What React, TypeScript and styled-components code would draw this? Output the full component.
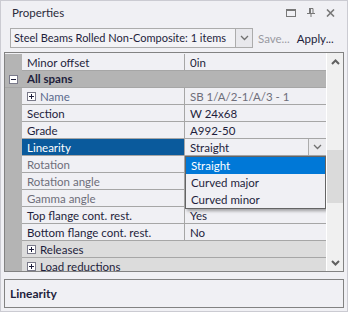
import React from 'react';
import styled, { createGlobalStyle } from 'styled-components';

const FONT = `'Lato', 'Noto Sans', sans-serif`;

interface PropRow {
  kind: 'prop' | 'category' | 'group';
  name: string;
  value?: string;
  muted?: boolean;
  expandable?: boolean;
  selected?: boolean;
}

const rows: PropRow[] = [
  { kind: 'prop', name: 'Minor offset', value: '0in' },
  { kind: 'category', name: 'All spans' },
  { kind: 'prop', name: 'Name', value: 'SB 1/A/2-1/A/3 - 1', muted: true, expandable: true },
  { kind: 'prop', name: 'Section', value: 'W 24x68' },
  { kind: 'prop', name: 'Grade', value: 'A992-50' },
  { kind: 'prop', name: 'Linearity', value: 'Straight', selected: true },
  { kind: 'prop', name: 'Rotation', value: '', muted: true },
  { kind: 'prop', name: 'Rotation angle', value: '', muted: true },
  { kind: 'prop', name: 'Gamma angle', value: '', muted: true },
  { kind: 'prop', name: 'Top flange cont. rest.', value: 'Yes' },
  { kind: 'prop', name: 'Bottom flange cont. rest.', value: 'No' },
  { kind: 'group', name: 'Releases' },
  { kind: 'group', name: 'Load reductions' },
];

const options = ['Straight', 'Curved major', 'Curved minor'];

const ChevronDown: React.FC<{ color?: string; weight?: number }> = ({ color = '#606060', weight = 1.3 }) => (
  <svg width="9" height="6" viewBox="0 0 9 6">
    <path d="M1 1 L4.5 4.5 L8 1" fill="none" stroke={color} strokeWidth={weight} />
  </svg>
);

const ChevronUp: React.FC = () => (
  <svg width="9" height="6" viewBox="0 0 9 6">
    <path d="M1 5 L4.5 1.5 L8 5" fill="none" stroke="#606060" strokeWidth="2" />
  </svg>
);

const ExpandBox: React.FC<{ open?: boolean }> = ({ open }) => (
  <svg width="9" height="9" viewBox="0 0 9 9">
    <rect x="0.5" y="0.5" width="8" height="8" fill="#fff" stroke="#7a7a8a" />
    <path d="M2 4.5 H7" stroke="#1e1e3c" />
    {!open && <path d="M4.5 2 V7" stroke="#1e1e3c" />}
  </svg>
);

const App: React.FC = () => {
  return (
    <>
      <GlobalStyle />
      <Panel>
        <TitleBar>
          <Title>Properties</Title>
          <TitleIcons>
            <svg width="10" height="8" viewBox="0 0 10 8">
              <rect x="0.5" y="1" width="9" height="6.5" fill="none" stroke="#777" />
              <rect x="0" y="0" width="10" height="2" fill="#777" />
            </svg>
            <svg width="8" height="9" viewBox="0 0 8 9">
              <path d="M2 0.5 H6 V5" fill="none" stroke="#777" />
              <rect x="2" y="0" width="2" height="5" fill="#777" />
              <path d="M0 5.5 H8" stroke="#777" />
              <path d="M4 5.5 V9" stroke="#777" />
            </svg>
            <svg width="9" height="8" viewBox="0 0 9 8">
              <path d="M1 0.5 L8 7.5 M8 0.5 L1 7.5" stroke="#777" strokeWidth="1.6" />
            </svg>
          </TitleIcons>
        </TitleBar>

        <Toolbar>
          <Combo>
            <ComboText>Steel Beams Rolled Non-Composite: 1 items</ComboText>
            <ComboButton>
              <ChevronDown color="#707070" />
            </ComboButton>
          </Combo>
          <ToolLink $disabled>Save...</ToolLink>
          <ToolLink>Apply...</ToolLink>
        </Toolbar>

        <Grid>
          <List>
            {rows.map((r) =>
              r.kind === 'category' ? (
                <CategoryRow key={r.name}>
                  <Margin $bg="transparent">
                    <ExpandBox open />
                  </Margin>
                  <CategoryText>{r.name}</CategoryText>
                </CategoryRow>
              ) : r.kind === 'group' ? (
                <Row key={r.name}>
                  <Margin />
                  <GroupCell>
                    <ExpandBox />
                    <span>{r.name}</span>
                  </GroupCell>
                </Row>
              ) : (
                <Row key={r.name}>
                  <Margin />
                  <NameCell $selected={r.selected} $muted={r.muted} $blue={r.expandable}>
                    {r.expandable && <ExpandBox />}
                    <span>{r.name}</span>
                  </NameCell>
                  <ValueCell $muted={r.muted}>
                    <span>{r.value}</span>
                    {r.selected && (
                      <EditButton>
                        <ChevronDown color="#707070" />
                      </EditButton>
                    )}
                  </ValueCell>
                </Row>
              )
            )}
            <Popup>
              {options.map((o, i) => (
                <PopupItem key={o} $active={i === 0}>
                  {o}
                </PopupItem>
              ))}
            </Popup>
          </List>
          <ScrollBar>
            <ScrollArrow>
              <ChevronUp />
            </ScrollArrow>
            <Track>
              <Thumb />
            </Track>
            <ScrollArrow>
              <ChevronDown weight={2} />
            </ScrollArrow>
          </ScrollBar>
        </Grid>

        <Description>Linearity</Description>
      </Panel>
    </>
  );
};

export default App;

// Styled Components
const GlobalStyle = createGlobalStyle`
  html, body {
    margin: 0;
    padding: 0;
    background: #f0f0f4;
  }
  * {
    box-sizing: border-box;
  }
`;

const Panel = styled.div`
  width: 348px;
  height: 312px;
  display: flex;
  flex-direction: column;
  border: 1px solid #cbcbd2;
  background: #f0f0f4;
  font-family: ${FONT};
  font-size: 11.5px;
  color: #1e1e3c;
  overflow: hidden;
`;

const TitleBar = styled.div`
  height: 23px;
  display: flex;
  align-items: center;
  justify-content: space-between;
  padding: 0 12px 0 11px;
`;

const Title = styled.span`
  color: #2b2b3b;
  font-size: 11.5px;
`;

const TitleIcons = styled.div`
  display: flex;
  align-items: center;
  gap: 11px;
`;

const Toolbar = styled.div`
  display: flex;
  align-items: center;
  margin-top: 4px;
  padding-left: 9px;
  height: 20px;
`;

const Combo = styled.div`
  width: 243px;
  height: 20px;
  display: flex;
  border: 1px solid #acacac;
  background: #f3f3f6;
`;

const ComboText = styled.div`
  flex: 1;
  padding-left: 3px;
  line-height: 18px;
  font-size: 11px;
  white-space: nowrap;
  overflow: hidden;
`;

const ComboButton = styled.div`
  width: 17px;
  display: flex;
  align-items: center;
  justify-content: center;
  border-left: 1px solid #acacac;
  background: #e8e8ec;
`;

const ToolLink = styled.span<{ $disabled?: boolean }>`
  margin-left: ${(p) => (p.$disabled ? '5px' : '7px')};
  font-size: 11.5px;
  color: ${(p) => (p.$disabled ? '#9a9aa2' : '#1e1e3c')};
`;

const Grid = styled.div`
  height: 220px;
  margin: 4px 3px 0;
  display: flex;
  border: 1px solid #828282;
`;

const List = styled.div`
  position: relative;
  flex: 1;
  padding-top: 1px;
  overflow: hidden;
`;

const Row = styled.div`
  display: flex;
  height: 17px;
`;

const Margin = styled.div<{ $bg?: string }>`
  width: 17px;
  flex-shrink: 0;
  display: flex;
  align-items: center;
  justify-content: center;
  padding-right: 1px;
  background: ${(p) => p.$bg ?? '#b4b4b4'};
`;

const CategoryRow = styled.div`
  display: flex;
  height: 17px;
  background: #b4b4b4;
  border-bottom: 1px solid #a6a6a6;
`;

const CategoryText = styled.div`
  padding-left: 5px;
  line-height: 16px;
  font-weight: 700;
`;

const NameCell = styled.div<{ $selected?: boolean; $muted?: boolean; $blue?: boolean }>`
  width: 163px;
  display: flex;
  align-items: center;
  gap: 4px;
  padding-left: 5px;
  border-right: 1px solid #a6a6a6;
  border-bottom: 1px solid #a6a6a6;
  white-space: nowrap;
  background: ${(p) => (p.$selected ? '#0a5a9c' : 'transparent')};
  color: ${(p) => (p.$selected ? '#ffffff' : p.$blue ? '#5b6b8e' : p.$muted ? '#6e6e7a' : '#1e1e3c')};
`;

const ValueCell = styled.div<{ $muted?: boolean }>`
  flex: 1;
  display: flex;
  align-items: center;
  justify-content: space-between;
  padding-left: 5px;
  border-bottom: 1px solid #a6a6a6;
  white-space: nowrap;
  color: ${(p) => (p.$muted ? '#6e6e7a' : '#1e1e3c')};
`;

const EditButton = styled.div`
  width: 18px;
  height: 16px;
  display: flex;
  align-items: center;
  justify-content: center;
  border-left: 1px solid #acacac;
  background: #ebebee;
`;

const GroupCell = styled.div`
  flex: 1;
  display: flex;
  align-items: center;
  gap: 4px;
  padding-left: 5px;
  background: #dcdcdc;
  border-bottom: 1px solid #a6a6a6;
`;

const Popup = styled.div`
  position: absolute;
  left: 180px;
  top: 103px;
  width: 141px;
  border: 1px solid #646464;
  background: #f0f0f4;
  box-shadow: 2px 2px 3px rgba(0, 0, 0, 0.35);
`;

const PopupItem = styled.div<{ $active?: boolean }>`
  height: 17px;
  line-height: 17px;
  padding-left: 5px;
  background: ${(p) => (p.$active ? '#0078d7' : 'transparent')};
  color: ${(p) => (p.$active ? '#ffffff' : '#1e1e3c')};
`;

const ScrollBar = styled.div`
  width: 17px;
  display: flex;
  flex-direction: column;
  border-left: 1px solid #ffffff;
  background: #f0f0f0;
`;

const ScrollArrow = styled.div`
  height: 17px;
  display: flex;
  align-items: center;
  justify-content: center;
`;

const Track = styled.div`
  flex: 1;
`;

const Thumb = styled.div`
  margin-top: 80px;
  height: 53px;
  background: #dadada;
`;

const Description = styled.div`
  height: 29px;
  margin: 7px 3px 0;
  padding-left: 5px;
  display: flex;
  align-items: center;
  border: 1px solid #828282;
  font-weight: 700;
  font-size: 12px;
`;
